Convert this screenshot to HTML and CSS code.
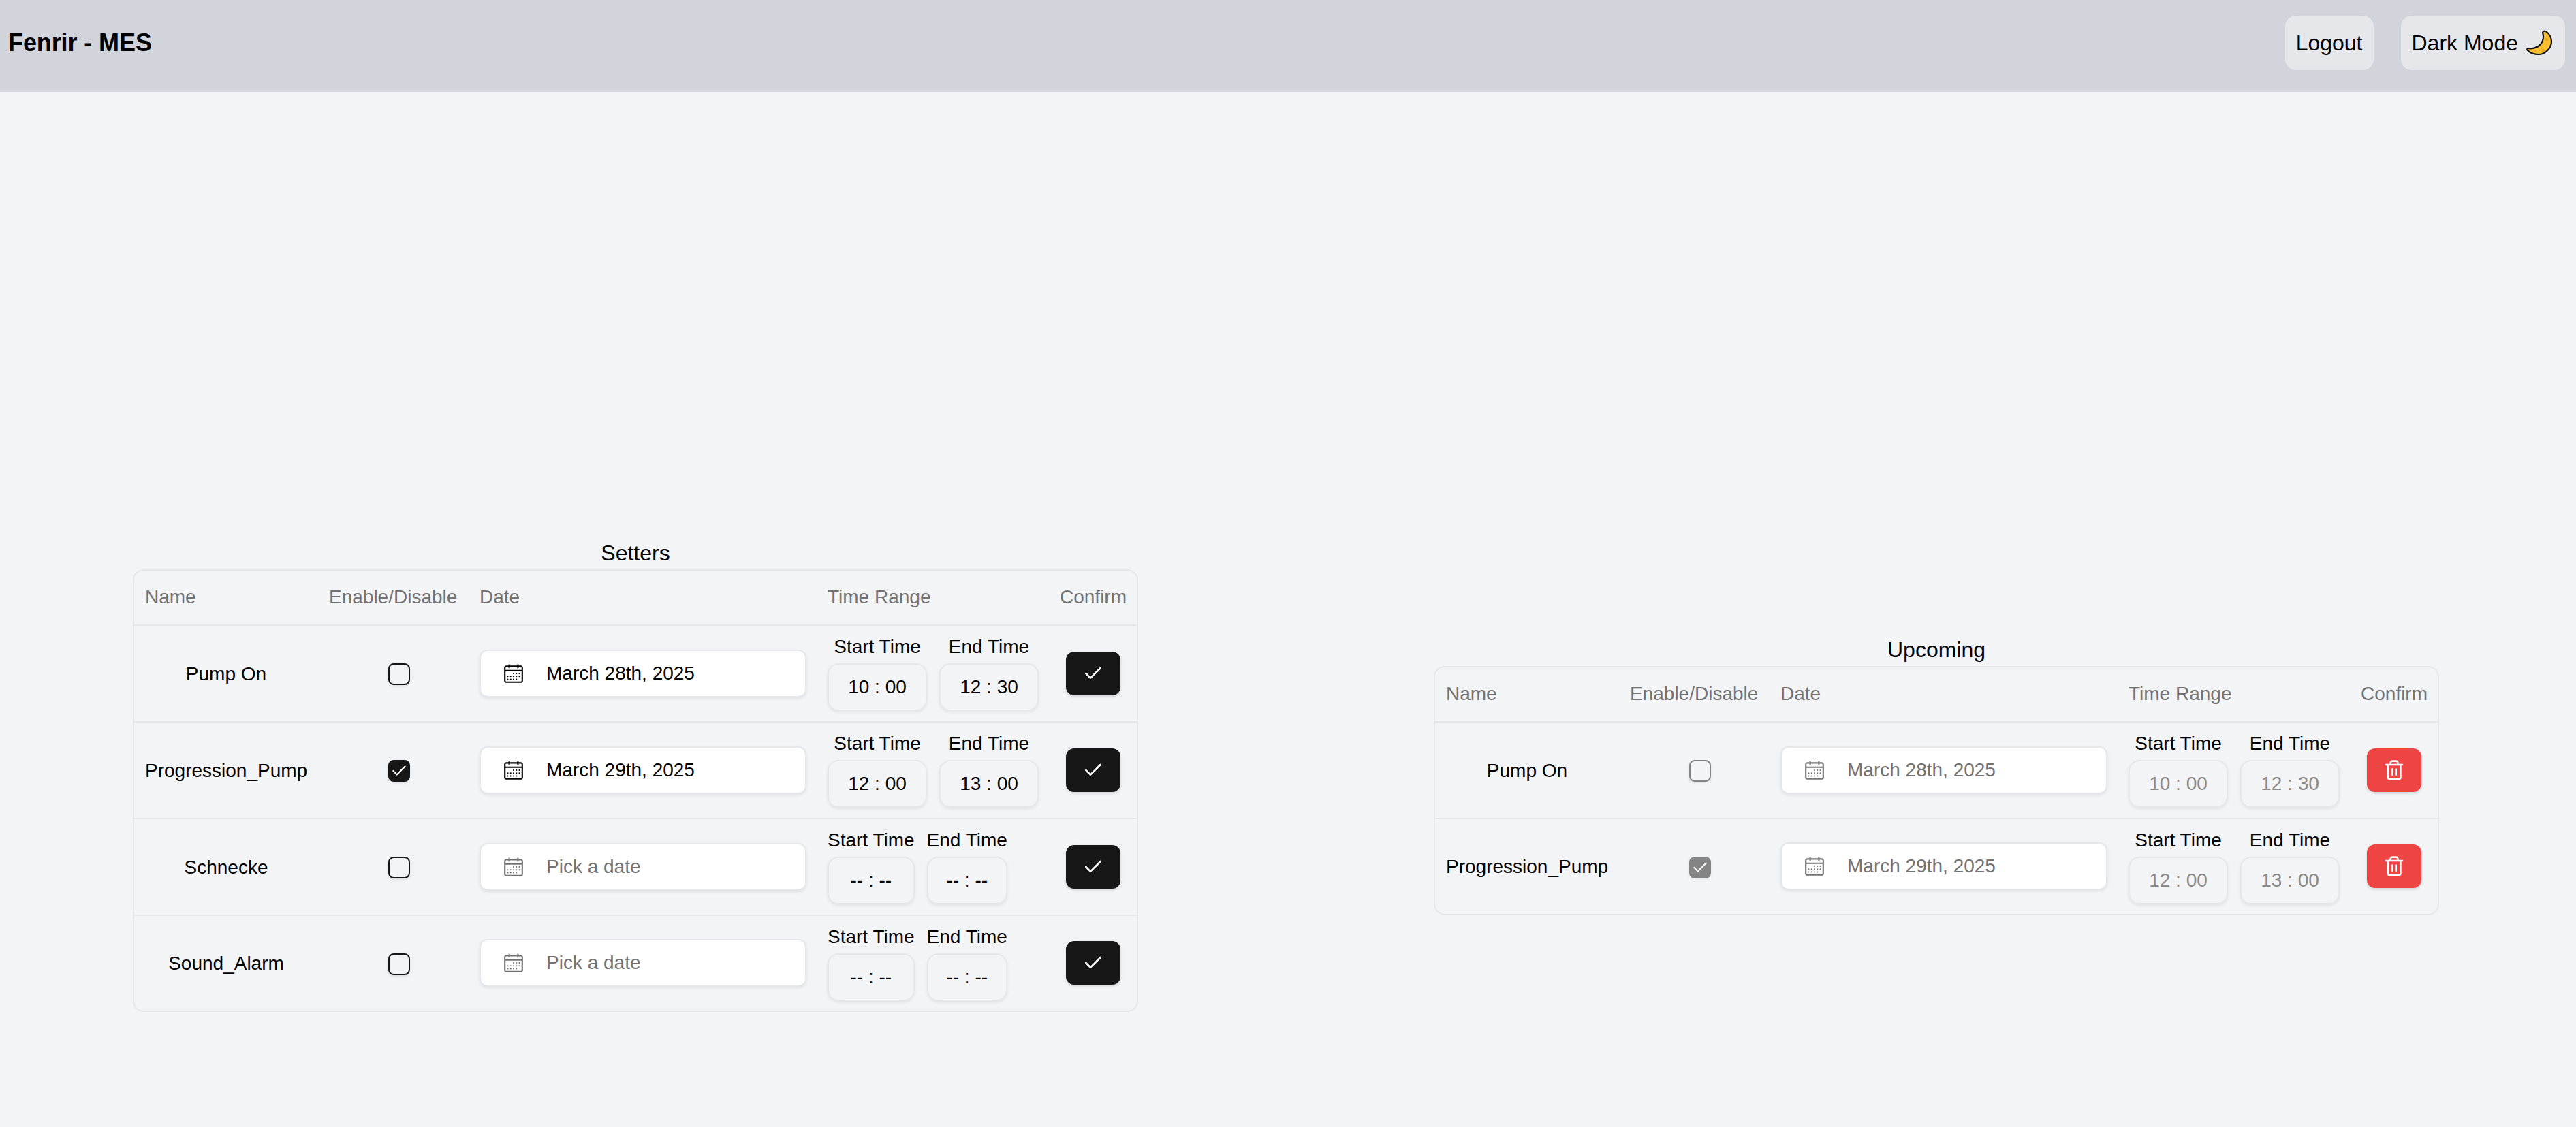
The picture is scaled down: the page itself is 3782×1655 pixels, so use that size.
FILE: index.html
```html
<!DOCTYPE html>
<html lang="en">
<head>
  <meta charset="UTF-8">
  <meta name="viewport" content="width=device-width, initial-scale=1.0">
  <title>Fenrir - MES</title>
  <link rel="stylesheet" href="styles.css">
</head>
<body>
  <!-- Icons used more than once -->
  <svg class="sprite" xmlns="http://www.w3.org/2000/svg">
    <symbol id="icon-calendar" viewBox="0 0 15 15">
      <path fill="currentColor" fill-rule="evenodd" d="M4.5 1C4.78 1 5 1.22 5 1.5V2H10V1.5C10 1.22 10.22 1 10.5 1C10.78 1 11 1.22 11 1.5V2H12.5C13.33 2 14 2.67 14 3.5V12.5C14 13.33 13.33 14 12.5 14H2.5C1.67 14 1 13.33 1 12.5V3.5C1 2.67 1.67 2 2.5 2H4V1.5C4 1.22 4.22 1 4.5 1ZM10 3V3.5C10 3.78 10.22 4 10.5 4C10.78 4 11 3.78 11 3.5V3H12.5C12.78 3 13 3.22 13 3.5V5H2V3.5C2 3.22 2.22 3 2.5 3H4V3.5C4 3.78 4.22 4 4.5 4C4.78 4 5 3.78 5 3.5V3H10ZM2 6V12.5C2 12.78 2.22 13 2.5 13H12.5C12.78 13 13 12.78 13 12.5V6H2Z"/>
      <g fill="currentColor">
        <circle cx="7.5" cy="7.5" r=".5"/><circle cx="9.5" cy="7.5" r=".5"/><circle cx="11.5" cy="7.5" r=".5"/>
        <circle cx="3.5" cy="9.5" r=".5"/><circle cx="5.5" cy="9.5" r=".5"/><circle cx="7.5" cy="9.5" r=".5"/><circle cx="9.5" cy="9.5" r=".5"/><circle cx="11.5" cy="9.5" r=".5"/>
        <circle cx="3.5" cy="11.5" r=".5"/><circle cx="5.5" cy="11.5" r=".5"/><circle cx="7.5" cy="11.5" r=".5"/><circle cx="9.5" cy="11.5" r=".5"/>
      </g>
    </symbol>
    <symbol id="icon-check" viewBox="0 0 24 24">
      <path d="M20 6 9 17l-5-5" fill="none" stroke="currentColor" stroke-width="2" stroke-linecap="round" stroke-linejoin="round"/>
    </symbol>
    <symbol id="icon-trash" viewBox="0 0 24 24">
      <path d="M3 6h18M19 6v14c0 1-1 2-2 2H7c-1 0-2-1-2-2V6M8 6V4c0-1 1-2 2-2h4c1 0 2 1 2 2v2M10 11v6M14 11v6" fill="none" stroke="currentColor" stroke-width="2" stroke-linecap="round" stroke-linejoin="round"/>
    </symbol>
  </svg>

  <header class="topbar">
    <div class="brand">Fenrir - MES</div>
    <div class="topbar-actions">
      <button class="nav-btn">Logout</button>
      <button class="nav-btn">
        Dark Mode
        <svg class="moon" viewBox="0 0 38 38" xmlns="http://www.w3.org/2000/svg">
          <path d="M2 27C7 28 16 27 21 21C25 16 26 10 24 4C25 1 28 1 30 3C35 7 37 13 37 18C36 28 27 36 18 36C11 36 5 33 2 30C1 29 1 27 2 27Z" fill="#fcc030" stroke="#111" stroke-width="2.2" stroke-linejoin="round"/>
          <circle cx="30" cy="14" r="2.4" fill="#e9a81c"/>
          <circle cx="14" cy="31" r="1.8" fill="#e9a81c"/>
          <circle cx="25" cy="30" r="2.4" fill="#e9a81c"/>
        </svg>
      </button>
    </div>
  </header>

  <main class="content">
    <!-- Setters -->
    <section class="panel">
      <h2 class="panel-title">Setters</h2>
      <div class="card">
        <table class="data-table">
          <colgroup>
            <col class="col-name"><col class="col-enable"><col class="col-date"><col class="col-time"><col class="col-action">
          </colgroup>
          <thead>
            <tr><th>Name</th><th>Enable/Disable</th><th>Date</th><th>Time Range</th><th>Confirm</th></tr>
          </thead>
          <tbody>
            <tr>
              <td class="name-cell">Pump On</td>
              <td class="check-cell"><span class="checkbox"></span></td>
              <td><button class="date-btn"><svg class="cal-icon"><use href="#icon-calendar"/></svg>March 28th, 2025</button></td>
              <td class="time-cell">
                <div class="time-range">
                  <div class="time-col"><span class="time-label">Start Time</span><div class="time-box time-set">10 : 00</div></div>
                  <div class="time-col"><span class="time-label">End Time</span><div class="time-box time-set">12 : 30</div></div>
                </div>
              </td>
              <td class="center-cell"><button class="action-btn"><svg class="action-icon"><use href="#icon-check"/></svg></button></td>
            </tr>
            <tr>
              <td class="name-cell">Progression_Pump</td>
              <td class="check-cell"><span class="checkbox checked"><svg class="tick"><use href="#icon-check"/></svg></span></td>
              <td><button class="date-btn"><svg class="cal-icon"><use href="#icon-calendar"/></svg>March 29th, 2025</button></td>
              <td class="time-cell">
                <div class="time-range">
                  <div class="time-col"><span class="time-label">Start Time</span><div class="time-box time-set">12 : 00</div></div>
                  <div class="time-col"><span class="time-label">End Time</span><div class="time-box time-set">13 : 00</div></div>
                </div>
              </td>
              <td class="center-cell"><button class="action-btn"><svg class="action-icon"><use href="#icon-check"/></svg></button></td>
            </tr>
            <tr>
              <td class="name-cell">Schnecke</td>
              <td class="check-cell"><span class="checkbox"></span></td>
              <td><button class="date-btn placeholder"><svg class="cal-icon"><use href="#icon-calendar"/></svg>Pick a date</button></td>
              <td class="time-cell">
                <div class="time-range">
                  <div class="time-col"><span class="time-label">Start Time</span><div class="time-box">-- : --</div></div>
                  <div class="time-col"><span class="time-label">End Time</span><div class="time-box">-- : --</div></div>
                </div>
              </td>
              <td class="center-cell"><button class="action-btn"><svg class="action-icon"><use href="#icon-check"/></svg></button></td>
            </tr>
            <tr>
              <td class="name-cell">Sound_Alarm</td>
              <td class="check-cell"><span class="checkbox"></span></td>
              <td><button class="date-btn placeholder"><svg class="cal-icon"><use href="#icon-calendar"/></svg>Pick a date</button></td>
              <td class="time-cell">
                <div class="time-range">
                  <div class="time-col"><span class="time-label">Start Time</span><div class="time-box">-- : --</div></div>
                  <div class="time-col"><span class="time-label">End Time</span><div class="time-box">-- : --</div></div>
                </div>
              </td>
              <td class="center-cell"><button class="action-btn"><svg class="action-icon"><use href="#icon-check"/></svg></button></td>
            </tr>
          </tbody>
        </table>
      </div>
    </section>

    <!-- Upcoming -->
    <section class="panel">
      <h2 class="panel-title">Upcoming</h2>
      <div class="card">
        <table class="data-table">
          <colgroup>
            <col class="col-name"><col class="col-enable"><col class="col-date"><col class="col-time"><col class="col-action">
          </colgroup>
          <thead>
            <tr><th>Name</th><th>Enable/Disable</th><th>Date</th><th>Time Range</th><th>Confirm</th></tr>
          </thead>
          <tbody>
            <tr>
              <td class="name-cell">Pump On</td>
              <td class="check-cell"><span class="checkbox disabled"></span></td>
              <td><button class="date-btn placeholder"><svg class="cal-icon"><use href="#icon-calendar"/></svg>March 28th, 2025</button></td>
              <td class="time-cell">
                <div class="time-range">
                  <div class="time-col"><span class="time-label">Start Time</span><div class="time-box time-set muted">10 : 00</div></div>
                  <div class="time-col"><span class="time-label">End Time</span><div class="time-box time-set muted">12 : 30</div></div>
                </div>
              </td>
              <td class="center-cell"><button class="action-btn danger"><svg class="action-icon"><use href="#icon-trash"/></svg></button></td>
            </tr>
            <tr>
              <td class="name-cell">Progression_Pump</td>
              <td class="check-cell"><span class="checkbox checked disabled"><svg class="tick"><use href="#icon-check"/></svg></span></td>
              <td><button class="date-btn placeholder"><svg class="cal-icon"><use href="#icon-calendar"/></svg>March 29th, 2025</button></td>
              <td class="time-cell">
                <div class="time-range">
                  <div class="time-col"><span class="time-label">Start Time</span><div class="time-box time-set muted">12 : 00</div></div>
                  <div class="time-col"><span class="time-label">End Time</span><div class="time-box time-set muted">13 : 00</div></div>
                </div>
              </td>
              <td class="center-cell"><button class="action-btn danger"><svg class="action-icon"><use href="#icon-trash"/></svg></button></td>
            </tr>
          </tbody>
        </table>
      </div>
    </section>
  </main>
</body>
</html>
```

FILE: styles.css
```css
* {
  box-sizing: border-box;
}

body {
  margin: 0;
  background-color: #f3f4f6;
  color: #000;
  font-family: "Liberation Sans", Arial, sans-serif;
  font-size: 28px;
  line-height: 40px;
}

button {
  font-family: inherit;
  cursor: pointer;
}

.sprite {
  display: none;
}

/* Top bar */
.topbar {
  display: flex;
  justify-content: space-between;
  align-items: center;
  height: 135px;
  padding: 23px 16px 32px 12px;
  background-color: #d1d5db;
}

.brand {
  font-size: 36px;
  font-weight: bold;
  letter-spacing: -0.1px;
}

.topbar-actions {
  display: flex;
  gap: 40px;
}

.nav-btn {
  display: flex;
  align-items: center;
  height: 80px;
  padding: 0 16px;
  border: none;
  border-radius: 16px;
  background-color: #e5e7eb;
  color: #000;
  font-size: 32px;
}

.moon {
  width: 38px;
  height: 38px;
  margin: 0 3px 0 12px;
}

/* Panels */
.content {
  display: flex;
  align-items: center;
  gap: 434px;
  height: 1520px;
  padding: 482px 0 0 195px;
}

.panel {
  width: 1476px;
}

.panel-title {
  margin: 0;
  padding-top: 1px;
  font-size: 32px;
  font-weight: normal;
  line-height: 48px;
  text-align: center;
}

.card {
  border: 2px solid #e5e7eb;
  border-radius: 16px;
}

/* Table */
.data-table {
  width: 1472px;
  border-collapse: collapse;
  table-layout: fixed;
}

.col-name { width: 270px; }
.col-enable { width: 221px; }
.col-date { width: 511px; }
.col-time { width: 341px; }
.col-action { width: 129px; }

.data-table th {
  height: 80px;
  padding: 0 16px;
  border-bottom: 2px solid #e5e7eb;
  color: #737373;
  font-weight: normal;
  text-align: left;
}

.data-table td {
  height: 142px;
  padding: 0 16px;
  border-bottom: 2px solid #e5e7eb;
  vertical-align: middle;
}

.data-table tbody tr:last-child td {
  height: 140px;
  border-bottom: none;
}

.name-cell,
.center-cell {
  text-align: center;
}

.data-table td.name-cell {
  padding-top: 2px;
}

.data-table td.check-cell {
  padding-left: 32px;
  text-align: center;
}

/* Checkbox */
.checkbox {
  display: inline-flex;
  align-items: center;
  justify-content: center;
  width: 32px;
  height: 32px;
  border: 2px solid #171717;
  border-radius: 8px;
  box-shadow: 0 2px 4px rgba(0, 0, 0, 0.1);
  vertical-align: middle;
}

.checkbox.checked {
  background-color: #171717;
  color: #fff;
}

.checkbox.disabled {
  opacity: 0.5;
}

.tick {
  width: 26px;
  height: 26px;
}

/* Date picker */
.date-btn {
  display: flex;
  align-items: center;
  width: 480px;
  height: 70px;
  padding: 0 30px 0 32px;
  border: 2px solid #e5e7eb;
  border-radius: 12px;
  background-color: #fff;
  box-shadow: 0 2px 4px rgba(0, 0, 0, 0.08);
  color: #000;
  font-size: 28px;
}

.date-btn.placeholder {
  color: #737373;
}

.cal-icon {
  width: 32px;
  height: 32px;
  margin-right: 32px;
}

/* Time range */
.data-table td.time-cell {
  padding: 11px 16px 14px;
  vertical-align: top;
}

.time-range {
  display: flex;
  gap: 18px;
}

.time-col {
  display: flex;
  flex-direction: column;
  gap: 4px;
  text-align: center;
}

.time-box {
  height: 70px;
  border: 2px solid #e5e7eb;
  border-radius: 16px;
  box-shadow: 0 2px 4px rgba(0, 0, 0, 0.08);
  line-height: 66px;
  text-align: center;
}

.time-set {
  width: 146px;
}

.muted {
  color: #8a8a8a;
}

/* Row action button */
.action-btn {
  display: inline-flex;
  align-items: center;
  justify-content: center;
  width: 80px;
  height: 64px;
  padding: 0;
  border: none;
  border-radius: 12px;
  background-color: #171717;
  box-shadow: 0 2px 4px rgba(0, 0, 0, 0.15);
  color: #fff;
  vertical-align: middle;
}

.action-btn.danger {
  background-color: #ef4444;
}

.action-icon {
  width: 32px;
  height: 32px;
}
```
